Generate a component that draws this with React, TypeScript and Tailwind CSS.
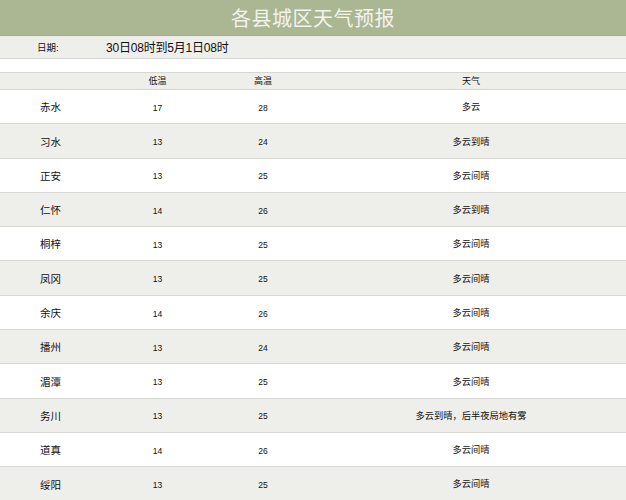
const rows = [
  { name: "赤水", low: 17, high: 28, sky: "多云" },
  { name: "习水", low: 13, high: 24, sky: "多云到晴" },
  { name: "正安", low: 13, high: 25, sky: "多云间晴" },
  { name: "仁怀", low: 14, high: 26, sky: "多云到晴" },
  { name: "桐梓", low: 13, high: 25, sky: "多云间晴" },
  { name: "凤冈", low: 13, high: 25, sky: "多云间晴" },
  { name: "余庆", low: 14, high: 26, sky: "多云间晴" },
  { name: "播州", low: 13, high: 24, sky: "多云间晴" },
  { name: "湄潭", low: 13, high: 25, sky: "多云间晴" },
  { name: "务川", low: 13, high: 25, sky: "多云到晴，后半夜局地有雾" },
  { name: "道真", low: 14, high: 26, sky: "多云间晴" },
  { name: "绥阳", low: 13, high: 25, sky: "多云间晴" },
];

const font = "font-['Liberation_Sans','Noto_Sans_CJK_SC',sans-serif]";

export default function App() {
  return (
    <div className={`w-[626px] h-[500px] overflow-hidden bg-white text-[#111] ${font}`}>
      <div className="h-[36px] bg-[#abb692] border-b border-[#a3ad8a] flex items-center justify-center">
        <h1 className="text-[20px] leading-none text-[#f2f4ec] tracking-[0.5px] font-['Noto_Sans_CJK_SC',serif] font-normal">
          各县城区天气预报
        </h1>
      </div>
      <div className="h-[23px] bg-[#eeeeea] border-b border-[#d6d6d2] flex items-center pt-[2px]">
        <span className="pl-[37px] w-[106px] text-[9.5px]">日期:</span>
        <span className="text-[12px] tracking-[-0.2px]">30日08时到5月1日08时</span>
      </div>
      <div className="h-[14px] border-b border-[#d6d6d2]" />
      <div className="h-[17px] bg-[#eeeeea] border-b border-[#d6d6d2] grid grid-cols-[105px_105px_106px_1fr] items-center text-[9px] pt-[1px]">
        <span />
        <span className="text-center">低温</span>
        <span className="text-center">高温</span>
        <span className="text-center">天气</span>
      </div>
      {rows.map((r, i) => (
        <div
          key={r.name}
          className={`h-[34.3px] border-b border-[#d8d8d4] grid grid-cols-[105px_105px_106px_1fr] items-center pt-[3px] ${
            i % 2 ? "bg-[#eeeeea]" : "bg-white"
          }`}
        >
          <span className="pl-[40px] text-[10.5px]">{r.name}</span>
          <span className="text-center text-[8.5px]">{r.low}</span>
          <span className="text-center text-[8.5px]">{r.high}</span>
          <span className="text-center text-[9.25px]">{r.sky}</span>
        </div>
      ))}
    </div>
  );
}
